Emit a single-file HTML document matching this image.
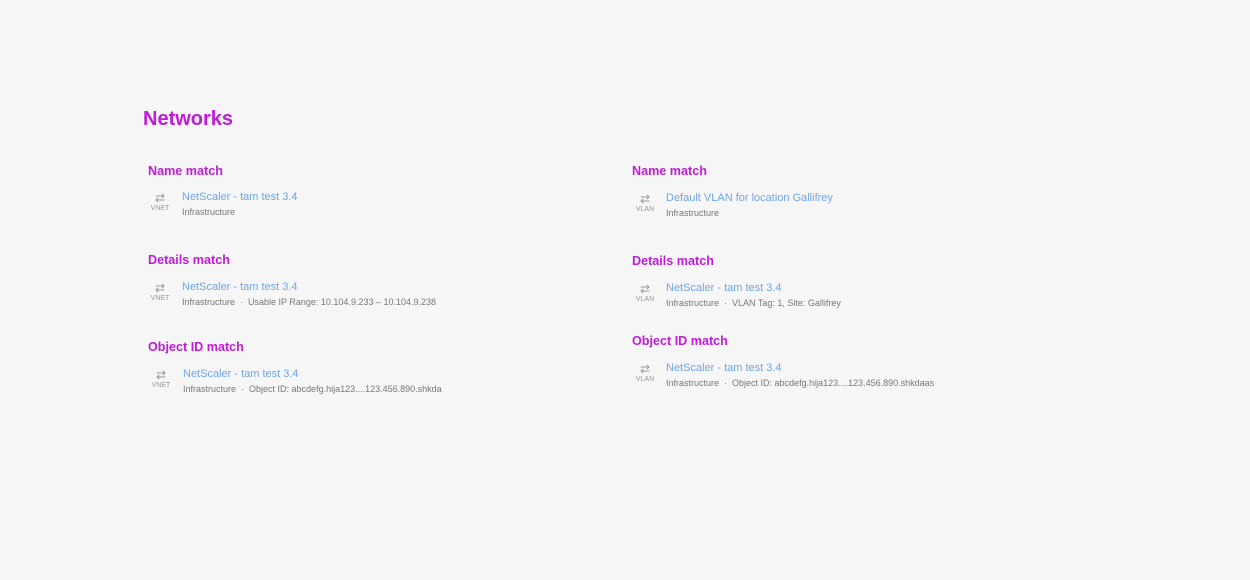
<!DOCTYPE html>
<html><head><style>
body{margin:0;width:1250px;height:580px;background:#f6f6f6;font-family:"Liberation Sans",sans-serif;position:relative;overflow:hidden}
.a{position:absolute;white-space:nowrap}
.t{font-size:20px;font-weight:bold;color:#c11ad8;left:143px;top:108px}
.h{font-size:12.6px;font-weight:bold;color:#c11ad8}
.l{font-size:11px;color:#6ea6e6}
.s{font-size:9px;color:#777}
.s i{font-style:normal;margin:0 5px}
.ic{width:30px;text-align:center;color:#999}
.ic b{display:block;font-size:12px;font-weight:normal;line-height:12px}
.ic span{display:block;font-size:7px;line-height:9px;color:#999}
</style></head><body>
<div class="a t">Networks</div>

<div class="a h" style="left:148px;top:164px">Name match</div>
<div class="a ic" style="left:145px;top:192px"><b>⇄</b><span>VNET</span></div>
<div class="a l" style="left:182px;top:191px">NetScaler - tam test 3.4</div>
<div class="a s" style="left:182px;top:207px">Infrastructure</div>

<div class="a h" style="left:148px;top:253px">Details match</div>
<div class="a ic" style="left:145px;top:282px"><b>⇄</b><span>VNET</span></div>
<div class="a l" style="left:182px;top:281px">NetScaler - tam test 3.4</div>
<div class="a s" style="left:182px;top:297px">Infrastructure<i>·</i>Usable IP Range: 10.104.9.233 – 10.104.9.238</div>

<div class="a h" style="left:148px;top:340px">Object ID match</div>
<div class="a ic" style="left:146px;top:369px"><b>⇄</b><span>VNET</span></div>
<div class="a l" style="left:183px;top:368px">NetScaler - tam test 3.4</div>
<div class="a s" style="left:183px;top:384px">Infrastructure<i>·</i>Object ID: abcdefg.hija123....123.456.890.shkda</div>

<div class="a h" style="left:632px;top:164px">Name match</div>
<div class="a ic" style="left:630px;top:193px"><b>⇄</b><span>VLAN</span></div>
<div class="a l" style="left:666px;top:192px">Default VLAN for location Gallifrey</div>
<div class="a s" style="left:666px;top:208px">Infrastructure</div>

<div class="a h" style="left:632px;top:254px">Details match</div>
<div class="a ic" style="left:630px;top:283px"><b>⇄</b><span>VLAN</span></div>
<div class="a l" style="left:666px;top:282px">NetScaler - tam test 3.4</div>
<div class="a s" style="left:666px;top:298px">Infrastructure<i>·</i>VLAN Tag: 1, Site: Gallifrey</div>

<div class="a h" style="left:632px;top:334px">Object ID match</div>
<div class="a ic" style="left:630px;top:363px"><b>⇄</b><span>VLAN</span></div>
<div class="a l" style="left:666px;top:362px">NetScaler - tam test 3.4</div>
<div class="a s" style="left:666px;top:378px">Infrastructure<i>·</i>Object ID: abcdefg.hija123....123.456.890.shkdaas</div>
</body></html>
